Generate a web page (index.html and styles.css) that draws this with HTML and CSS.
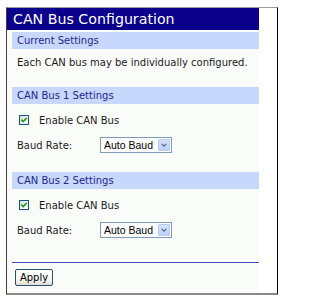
FILE: index.html
```html
<!DOCTYPE html>
<html>
<head>
<meta charset="utf-8">
<title>CAN Bus Configuration</title>
<link rel="stylesheet" href="styles.css">
</head>
<body>
<div class="frame">
  <form class="panel">
    <div class="title">CAN Bus Configuration</div>

    <div class="band">Current Settings</div>
    <p class="desc">Each CAN bus may be individually configured.</p>

    <div class="band">CAN Bus 1 Settings</div>
    <div class="group">
      <label class="check-row">
        <span class="cb"><svg viewBox="0 0 8 8" width="8" height="8"><path d="M1.2 3.6 L3.2 5.6 L6.8 1.8" fill="none" stroke="#21a121" stroke-width="1.7"/></svg></span>
        <span>Enable CAN Bus</span>
      </label>
      <div class="field-row">
        <span class="label">Baud Rate:</span>
        <span class="select">
          <span class="select-text">Auto Baud</span>
          <span class="select-btn"><svg viewBox="0 0 12 13" width="12" height="13"><path d="M3 5 L6 8 L9 5" fill="none" stroke="#4d6185" stroke-width="1.6"/></svg></span>
        </span>
      </div>
    </div>

    <div class="band">CAN Bus 2 Settings</div>
    <div class="group">
      <label class="check-row">
        <span class="cb"><svg viewBox="0 0 8 8" width="8" height="8"><path d="M1.2 3.6 L3.2 5.6 L6.8 1.8" fill="none" stroke="#21a121" stroke-width="1.7"/></svg></span>
        <span>Enable CAN Bus</span>
      </label>
      <div class="field-row">
        <span class="label">Baud Rate:</span>
        <span class="select">
          <span class="select-text">Auto Baud</span>
          <span class="select-btn"><svg viewBox="0 0 12 13" width="12" height="13"><path d="M3 5 L6 8 L9 5" fill="none" stroke="#4d6185" stroke-width="1.6"/></svg></span>
        </span>
      </div>
    </div>

    <div class="rule"></div>
    <div class="actions">
      <button type="button" class="btn">Apply</button>
    </div>
  </form>
</div>
</body>
</html>
```

FILE: styles.css
```css
html, body {
  margin: 0;
  padding: 0;
  background: #ffffff;
}

body {
  font-family: "DejaVu Sans", Verdana, sans-serif;
  font-size: 10px;
  color: #1a1a1a;
}

.frame {
  margin: 7px 0 0 6px;
  width: 270px;
  border-top: 1px solid #9c9c9c;
  border-left: 1px solid #404040;
  border-right: 1px solid #000000;
  border-bottom: 2px solid #8a8a8a;
  background: #ffffff;
}

.panel {
  width: 252px;
  margin: 0;
  padding-bottom: 7px;
  background: #fafcfa;
}

.title {
  height: 22px;
  line-height: 22px;
  padding-left: 6px;
  background: #0a008c;
  color: #ffffff;
  font-size: 14.2px;
}

.band {
  margin: 2px 0 0 5px;
  height: 17px;
  line-height: 17px;
  padding-left: 5px;
  background: #c8d8fc;
  color: #1f2490;
}

.desc {
  margin: 0;
  padding: 8px 0 16px 10px;
  line-height: 12px;
}

.group {
  display: flex;
  flex-direction: column;
  gap: 10px;
  padding: 9px 0 17px 10px;
}

.check-row {
  display: flex;
  align-items: center;
  height: 14px;
  padding-left: 2px;
  gap: 10px;
}

.cb {
  display: flex;
  width: 8px;
  height: 8px;
  border: 1px solid #1c5180;
  background: linear-gradient(135deg, #dcdcd4 0%, #f6f6f3 60%, #ffffff 100%);
}

.cb svg {
  width: 8px;
  height: 8px;
}

.field-row {
  display: flex;
  align-items: center;
  height: 16px;
}

.label {
  width: 83px;
}

.select {
  display: flex;
  align-items: center;
  justify-content: space-between;
  box-sizing: border-box;
  width: 72px;
  height: 16px;
  border: 1px solid #7f9db9;
  background: #ffffff;
  padding: 0 1px 0 3px;
  font-family: "Liberation Sans", Arial, sans-serif;
  font-size: 10.5px;
  color: #000000;
}

.select-btn {
  display: flex;
  box-sizing: border-box;
  width: 12px;
  height: 12px;
  border: 1px solid #b8cbf4;
  border-radius: 1px;
  background: linear-gradient(180deg, #d6e2fd 0%, #bccffa 100%);
}

.select-btn svg {
  width: 10px;
  height: 10px;
}

.rule {
  margin: 7px 0 0 5px;
  height: 1px;
  background: #4a4ac2;
}

.actions {
  padding: 6px 0 0 8px;
}

.btn {
  display: block;
  box-sizing: border-box;
  width: 38px;
  height: 17px;
  padding: 0;
  border: 1px solid #2b4d76;
  border-radius: 2px;
  background: linear-gradient(180deg, #ffffff 0%, #f4f4ef 70%, #dcdcd2 100%);
  font-family: "DejaVu Sans", Verdana, sans-serif;
  font-size: 10px;
  color: #000000;
  line-height: 15px;
}
```
